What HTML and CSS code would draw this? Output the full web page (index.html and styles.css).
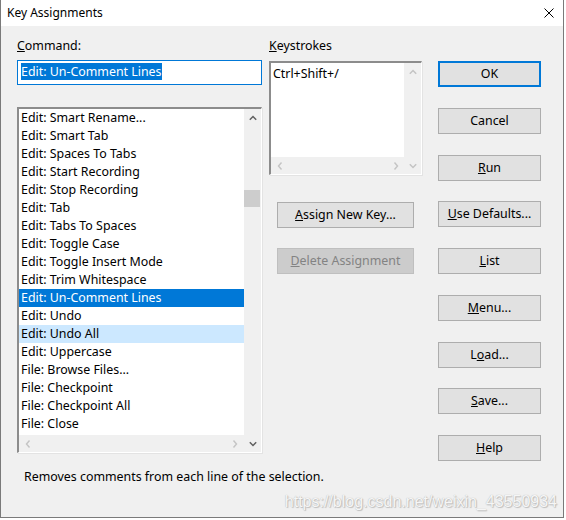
FILE: index.html
```html
<!DOCTYPE html>
<html>
<head>
<meta charset="utf-8">
<link rel="stylesheet" href="styles.css">
</head>
<body>
<div class="window">
  <div class="titlebar">
    <span class="title">Key Assignments</span>
    <svg class="close" width="10" height="10" viewBox="0 0 10 10"><path d="M0.5 0.5 L9.5 9.5 M9.5 0.5 L0.5 9.5" stroke="#000" stroke-width="1" fill="none"/></svg>
  </div>
  <div class="client">
    <div class="main">
      <div class="col-left">
        <div class="label"><u>C</u>ommand:</div>
        <div class="input"><span class="sel">Edit: Un-Comment Lines</span></div>
        <div class="listbox">
          <div class="list-content">
            <div class="items">
              <div class="item">Edit: Smart Rename...</div>
              <div class="item">Edit: Smart Tab</div>
              <div class="item">Edit: Spaces To Tabs</div>
              <div class="item">Edit: Start Recording</div>
              <div class="item">Edit: Stop Recording</div>
              <div class="item">Edit: Tab</div>
              <div class="item">Edit: Tabs To Spaces</div>
              <div class="item">Edit: Toggle Case</div>
              <div class="item">Edit: Toggle Insert Mode</div>
              <div class="item">Edit: Trim Whitespace</div>
              <div class="item selected">Edit: Un-Comment Lines</div>
              <div class="item">Edit: Undo</div>
              <div class="item hover">Edit: Undo All</div>
              <div class="item">Edit: Uppercase</div>
              <div class="item">File: Browse Files...</div>
              <div class="item">File: Checkpoint</div>
              <div class="item">File: Checkpoint All</div>
              <div class="item">File: Close</div>
              <div class="item">File: Close All</div>
            </div>
            <div class="hscroll">
              <svg class="arrow" width="6" height="8" viewBox="0 0 6 8"><polyline points="4.5,0.5 1.5,4 4.5,7.5" stroke="#c4c4c4" stroke-width="1.4" fill="none"/></svg>
              <svg class="arrow" width="6" height="8" viewBox="0 0 6 8"><polyline points="1.5,0.5 4.5,4 1.5,7.5" stroke="#c4c4c4" stroke-width="1.4" fill="none"/></svg>
            </div>
          </div>
          <div class="vscroll">
            <div class="sbtn"><svg width="8" height="6" viewBox="0 0 8 6"><polyline points="0.8,4.8 4,1.5 7.2,4.8" stroke="#606060" stroke-width="1.5" fill="none"/></svg></div>
            <div class="track"><div class="thumb"></div></div>
            <div class="sbtn"><svg width="8" height="6" viewBox="0 0 8 6"><polyline points="0.8,1.2 4,4.5 7.2,1.2" stroke="#606060" stroke-width="1.5" fill="none"/></svg></div>
          </div>
        </div>
      </div>
      <div class="col-mid">
        <div class="label"><u>K</u>eystrokes</div>
        <div class="keybox">
          <div class="list-content">
            <div class="items">
              <div class="item">Ctrl+Shift+/</div>
            </div>
            <div class="hscroll key-h">
              <svg class="arrow" width="6" height="8" viewBox="0 0 6 8"><polyline points="4.5,0.5 1.5,4 4.5,7.5" stroke="#c4c4c4" stroke-width="1.4" fill="none"/></svg>
              <svg class="arrow" width="6" height="8" viewBox="0 0 6 8"><polyline points="1.5,0.5 4.5,4 1.5,7.5" stroke="#c4c4c4" stroke-width="1.4" fill="none"/></svg>
            </div>
          </div>
          <div class="vscroll">
            <div class="sbtn"><svg width="8" height="6" viewBox="0 0 8 6"><polyline points="0.8,4.8 4,1.5 7.2,4.8" stroke="#c4c4c4" stroke-width="1.5" fill="none"/></svg></div>
            <div class="track"></div>
            <div class="sbtn"><svg width="8" height="6" viewBox="0 0 8 6"><polyline points="0.8,1.2 4,4.5 7.2,1.2" stroke="#c4c4c4" stroke-width="1.5" fill="none"/></svg></div>
          </div>
        </div>
        <div class="mid-buttons">
          <div class="btn"><u>A</u>ssign New Key...</div>
          <div class="btn disabled"><u>D</u>elete Assignment</div>
        </div>
      </div>
      <div class="col-right">
        <div class="btn default">OK</div>
        <div class="btn">Cancel</div>
        <div class="btn"><u>R</u>un</div>
        <div class="btn"><u>U</u>se Defaults...</div>
        <div class="btn"><u>L</u>ist</div>
        <div class="btn"><u>M</u>enu...</div>
        <div class="btn">L<u>o</u>ad...</div>
        <div class="btn"><u>S</u>ave...</div>
        <div class="btn"><u>H</u>elp</div>
      </div>
    </div>
    <div class="status">Removes comments from each line of the selection.</div>
    <div class="watermark">https://blog.csdn.net/weixin_43550934</div>
  </div>
</div>
</body>
</html>
```
FILE: styles.css
```css
html, body {
  margin: 0;
  padding: 0;
  background: #ffffff;
}
body {
  font-family: "Noto Sans", "Liberation Sans", sans-serif;
  font-size: 12.4px;
  color: #000;
}
.window {
  width: 564px;
  height: 518px;
  box-sizing: border-box;
  border: 1px solid #7a7a7a;
  border-top: none;
  display: flex;
  flex-direction: column;
  background: #f0f0f0;
}
.titlebar {
  height: 26px;
  flex: none;
  background: #fff;
  display: flex;
  align-items: center;
  justify-content: space-between;
  padding: 0 9px 0 6px;
}
.title {
  font-size: 12px;
  line-height: 16px;
}
.close {
  display: block;
}
.client {
  flex: 1;
  padding: 0 6px 0 16px;
  display: flex;
  flex-direction: column;
}
.main {
  display: flex;
  padding-top: 12px;
}
.label {
  line-height: 16px;
  height: 16px;
}
.col-left {
  width: 245px;
  display: flex;
  flex-direction: column;
}
.input {
  margin-top: 6px;
  height: 25px;
  box-sizing: border-box;
  border: 1px solid #0078d7;
  background: #fff;
  padding: 2px 0 0 3px;
}
.sel {
  display: inline-block;
  background: #0078d7;
  color: #fff;
  line-height: 17px;
  height: 17px;
}
.listbox, .keybox {
  display: flex;
  box-sizing: border-box;
  background: #fff;
  border-top: 2px solid #8c8c8c;
  border-left: 2px solid #8c8c8c;
  border-right: 1px solid #ffffff;
  border-bottom: 1px solid #ffffff;
  box-shadow: 1px 1px 0 #e3e3e3;
}
.listbox {
  margin-top: 22px;
  height: 346px;
}
.list-content {
  flex: 1;
  display: flex;
  flex-direction: column;
  min-width: 0;
}
.items {
  flex: 1;
  overflow: hidden;
}
.item {
  height: 18px;
  line-height: 18px;
  padding-left: 2px;
  white-space: nowrap;
}
.item.selected {
  background: #0078d7;
  color: #fff;
}
.item.hover {
  background: #cce8ff;
}
.hscroll {
  height: 17px;
  flex: none;
  background: #f0f0f0;
  display: flex;
  align-items: center;
  justify-content: space-between;
  padding: 0 6px 0 6px;
}
.arrow {
  display: block;
}
.vscroll {
  width: 17px;
  flex: none;
  background: #f0f0f0;
  display: flex;
  flex-direction: column;
}
.sbtn {
  height: 17px;
  display: flex;
  align-items: center;
  justify-content: center;
}
.track {
  flex: 1;
}
.thumb {
  margin-top: 64px;
  height: 17px;
  width: 16px;
  background: #cdcdcd;
}
.col-mid {
  width: 153px;
  margin-left: 7px;
  display: flex;
  flex-direction: column;
}
.col-mid .label {
  margin-bottom: 7px;
}
.keybox {
  height: 114px;
}
.keybox .item {
  margin-top: 2px;
  padding-left: 2px;
}
.key-h {
  padding: 0 5px 0 6px;
}
.mid-buttons {
  margin-top: 27px;
  margin-left: 8px;
  width: 137px;
  display: flex;
  flex-direction: column;
  gap: 20px;
}
.col-right {
  width: 103px;
  margin-left: 16px;
  margin-top: 23px;
  height: 400px;
  display: flex;
  flex-direction: column;
  justify-content: space-between;
}
.btn {
  height: 26px;
  box-sizing: border-box;
  border: 1px solid #adadad;
  background: #e1e1e1;
  display: flex;
  align-items: center;
  justify-content: center;
  line-height: 16px;
}
.btn.default {
  border: 2px solid #0078d7;
}
.btn.disabled {
  background: #cccccc;
  border-color: #bfbfbf;
  color: #838383;
}
.status {
  margin-top: 8px;
  padding-left: 7px;
  line-height: 16px;
}
.watermark {
  margin-top: 8px;
  text-align: right;
  font-family: "Liberation Sans", Arial, sans-serif;
  font-size: 16px;
  line-height: 18px;
  color: #f6f6f6;
  text-shadow: 0 0 1px #a8a8a8, 1px 1px 1px #c0c0c0;
}
```
